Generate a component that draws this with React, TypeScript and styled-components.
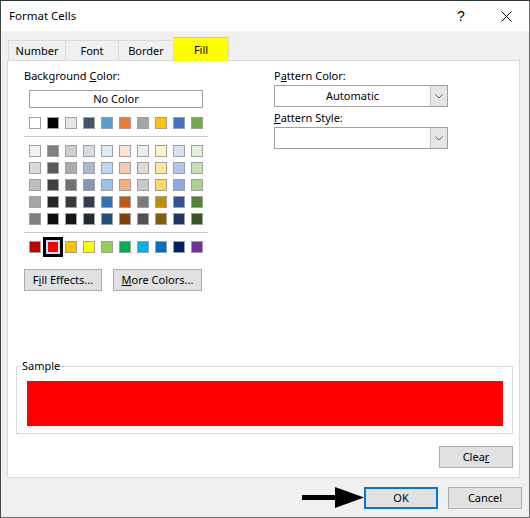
import React from "react";
import styled, { createGlobalStyle } from "styled-components";

const Global = createGlobalStyle`
  html, body { margin: 0; padding: 0; background: #f0f0f0; }
  * { box-sizing: border-box; }
  body {
    font-family: "Noto Sans", "DejaVu Sans", sans-serif;
    font-size: 11px;
    color: #000;
  }
`;

const Window = styled.div`
  width: 530px;
  height: 518px;
  display: flex;
  flex-direction: column;
  border: 1px solid #6b6b6b;
  border-top-color: #2b3b33;
  border-left-color: #3b4a42;
  background: #f0f0f0;
  overflow: hidden;
`;

const TitleBar = styled.div`
  height: 30px;
  flex-shrink: 0;
  background: #fff;
  display: flex;
  align-items: center;
  padding-left: 8px;
`;

const Title = styled.div`
  flex: 1;
  font-size: 11.5px;
  line-height: 16px;
`;

const HelpBox = styled.div`
  width: 40px;
  height: 30px;
  display: flex;
  align-items: center;
  justify-content: center;
  padding-right: 4px;
  font-size: 14px;
  font-family: "Liberation Sans", "Noto Sans", sans-serif;
`;

const CloseBox = styled.div`
  width: 46px;
  height: 30px;
  display: flex;
  align-items: center;
  justify-content: center;
`;

const Content = styled.div`
  padding: 6px 9px 0 6px;
  display: flex;
  flex-direction: column;
`;

const TabRow = styled.div`
  height: 23px;
  display: flex;
  align-items: flex-end;
  padding-left: 1px;
  position: relative;
  z-index: 1;
`;

const Tab = styled.div<{ $w: number; $active?: boolean }>`
  width: ${(p) => p.$w}px;
  height: ${(p) => (p.$active ? 24 : 20)}px;
  margin-right: -1px;
  margin-bottom: ${(p) => (p.$active ? -1 : 0)}px;
  border: 1px solid #d9d9d9;
  border-bottom: none;
  border-top-color: ${(p) => (p.$active ? "#e2e200" : "#d9d9d9")};
  background: ${(p) => (p.$active ? "#ffff00" : "#f0f0f0")};
  display: flex;
  align-items: center;
  justify-content: center;
  padding-top: ${(p) => (p.$active ? 0 : 1)}px;
  line-height: 14px;
`;

const Panel = styled.div`
  height: 418px;
  background: #fff;
  border: 1px solid #d9d9d9;
  display: flex;
  flex-direction: column;
`;

const TopArea = styled.div`
  display: flex;
  padding: 7px 0 0 16px;
`;

const LeftCol = styled.div`
  width: 250px;
  display: flex;
  flex-direction: column;
  align-items: flex-start;
`;

const RightCol = styled.div`
  width: 174px;
  display: flex;
  flex-direction: column;
`;

const Label = styled.div<{ $mt?: number }>`
  line-height: 16px;
  height: 16px;
  margin-top: ${(p) => p.$mt ?? 0}px;
  white-space: nowrap;
`;

const Key = styled.span`
  text-decoration: underline;
  text-underline-offset: 1px;
`;

const NoColorButton = styled.div`
  margin: 6px 0 0 5px;
  width: 174px;
  height: 18px;
  border: 1px solid #a0a0a0;
  background: #fff;
  display: flex;
  align-items: center;
  justify-content: center;
  line-height: 14px;
`;

const SwatchGrid = styled.div<{ $mt: number }>`
  margin: ${(p) => p.$mt}px 0 0 5px;
  display: grid;
  grid-template-columns: repeat(10, 12px);
  column-gap: 6px;
  row-gap: 5px;
`;

const Swatch = styled.div<{ $color: string; $selected?: boolean }>`
  width: 12px;
  height: 12px;
  background: ${(p) => p.$color};
  border: 1px solid ${(p) => (p.$selected ? "#bfe3ff" : "#a0a0a0")};
  box-shadow: ${(p) => (p.$selected ? "0 0 0 1px #bfe3ff, 0 0 0 4px #000" : "none")};
`;

const Divider = styled.div`
  margin-top: 7px;
  width: 184px;
  height: 1px;
  background: #c8c8c8;
`;

const ButtonRow = styled.div`
  margin-top: 16px;
  display: flex;
  gap: 11px;
`;

const Button = styled.div<{ $w: number; $default?: boolean }>`
  width: ${(p) => p.$w}px;
  height: 22px;
  background: #e1e1e1;
  border: ${(p) => (p.$default ? "2px solid #0078d7" : "1px solid #adadad")};
  display: flex;
  align-items: center;
  justify-content: center;
  line-height: 14px;
  white-space: nowrap;
`;

const Select = styled.div`
  margin-top: 1px;
  width: 174px;
  height: 22px;
  border: 1px solid #a0a0a0;
  background: #fff;
  display: flex;
`;

const SelectText = styled.div`
  flex: 1;
  display: flex;
  align-items: center;
  justify-content: center;
  line-height: 14px;
`;

const SelectArrow = styled.div`
  width: 17px;
  background: #e6e6e6;
  border-left: 1px solid #c4c4c4;
  display: flex;
  align-items: center;
  justify-content: center;
`;

const SampleBox = styled.fieldset`
  margin: auto 6px 0 8px;
  padding: 0;
  border: 1px solid #d9d9d9;
  min-width: 0;
`;

const SampleLegend = styled.legend`
  margin-left: 5px;
  padding: 0;
  line-height: 16px;
`;

const SampleFill = styled.div`
  margin: 7px 9px 7px 10px;
  height: 45px;
  background: #ff0000;
`;

const ClearRow = styled.div`
  margin-top: 12px;
  padding: 0 6px 9px 0;
  display: flex;
  justify-content: flex-end;
`;

const Footer = styled.div`
  padding: 9px 7px 0 0;
  display: flex;
  justify-content: flex-end;
  align-items: flex-start;
  gap: 10px;
`;

const OkGroup = styled.div`
  display: flex;
  align-items: flex-start;
`;

const ArrowSvg = styled.svg`
  display: block;
  width: 62px;
  height: 22px;
`;

const themeRow = ["#ffffff", "#000000", "#e7e6e6", "#44546a", "#5b9bd5", "#ed7d31", "#a5a5a5", "#ffc000", "#4472c4", "#70ad47"];
const themeShades = [
  ["#f2f2f2", "#7f7f7f", "#d0cece", "#d6dce4", "#ddebf7", "#fce4d6", "#ededed", "#fff2cc", "#d9e1f2", "#e2efda"],
  ["#d9d9d9", "#595959", "#aeaaaa", "#acb9ca", "#bdd7ee", "#f8cbad", "#dbdbdb", "#ffe699", "#b4c6e7", "#c6e0b4"],
  ["#bfbfbf", "#404040", "#757171", "#8497b0", "#9bc2e6", "#f4b084", "#c9c9c9", "#ffd966", "#8ea9db", "#a9d08e"],
  ["#a6a6a6", "#262626", "#3a3838", "#333f4f", "#2f75b5", "#c65911", "#7b7b7b", "#bf8f00", "#305496", "#548235"],
  ["#808080", "#0d0d0d", "#161616", "#222b35", "#1f4e78", "#833c0c", "#525252", "#806000", "#203764", "#375623"],
];
const standard = ["#c00000", "#ff0000", "#ffc000", "#ffff00", "#92d050", "#00b050", "#00b0f0", "#0070c0", "#002060", "#7030a0"];

const Chevron = () => (
  <svg width="8" height="5" viewBox="0 0 8 5">
    <polyline points="0.5,0.5 4,4 7.5,0.5" fill="none" stroke="#606060" strokeWidth="1" />
  </svg>
);

export default function App() {
  return (
    <>
      <Global />
      <Window>
        <TitleBar>
          <Title>Format Cells</Title>
          <HelpBox>?</HelpBox>
          <CloseBox>
            <svg width="11" height="11" viewBox="0 0 11 11">
              <path d="M0.5 0.5 L10.5 10.5 M10.5 0.5 L0.5 10.5" stroke="#000" strokeWidth="1" />
            </svg>
          </CloseBox>
        </TitleBar>
        <Content>
          <TabRow>
            <Tab $w={58}>Number</Tab>
            <Tab $w={54}>Font</Tab>
            <Tab $w={56}>Border</Tab>
            <Tab $w={56} $active>Fill</Tab>
          </TabRow>
          <Panel>
            <TopArea>
              <LeftCol>
                <Label>
                  Background <Key>C</Key>olor:
                </Label>
                <NoColorButton>No Color</NoColorButton>
                <SwatchGrid $mt={9}>
                  {themeRow.map((c, i) => (
                    <Swatch key={i} $color={c} />
                  ))}
                </SwatchGrid>
                <Divider />
                <SwatchGrid $mt={8}>
                  {themeShades.flat().map((c, i) => (
                    <Swatch key={i} $color={c} />
                  ))}
                </SwatchGrid>
                <Divider />
                <SwatchGrid $mt={8}>
                  {standard.map((c, i) => (
                    <Swatch key={i} $color={c} $selected={i === 1} />
                  ))}
                </SwatchGrid>
                <ButtonRow>
                  <Button $w={78}>
                    F<Key>i</Key>ll Effects...
                  </Button>
                  <Button $w={89}>
                    <Key>M</Key>ore Colors...
                  </Button>
                </ButtonRow>
              </LeftCol>
              <RightCol>
                <Label>
                  P<Key>a</Key>ttern Color:
                </Label>
                <Select>
                  <SelectText>Automatic</SelectText>
                  <SelectArrow>
                    <Chevron />
                  </SelectArrow>
                </Select>
                <Label $mt={3}>
                  <Key>P</Key>attern Style:
                </Label>
                <Select>
                  <SelectText />
                  <SelectArrow>
                    <Chevron />
                  </SelectArrow>
                </Select>
              </RightCol>
            </TopArea>
            <SampleBox>
              <SampleLegend>Sample</SampleLegend>
              <SampleFill />
            </SampleBox>
            <ClearRow>
              <Button $w={74}>
                Clea<Key>r</Key>
              </Button>
            </ClearRow>
          </Panel>
        </Content>
        <Footer>
          <OkGroup>
            <ArrowSvg viewBox="0 0 62 22">
              <rect x="0" y="8" width="35" height="5" fill="#000" />
              <polygon points="33,0 62,10.5 33,21" fill="#000" />
            </ArrowSvg>
            <Button $w={74} $default>
              OK
            </Button>
          </OkGroup>
          <Button $w={74}>Cancel</Button>
        </Footer>
      </Window>
    </>
  );
}
